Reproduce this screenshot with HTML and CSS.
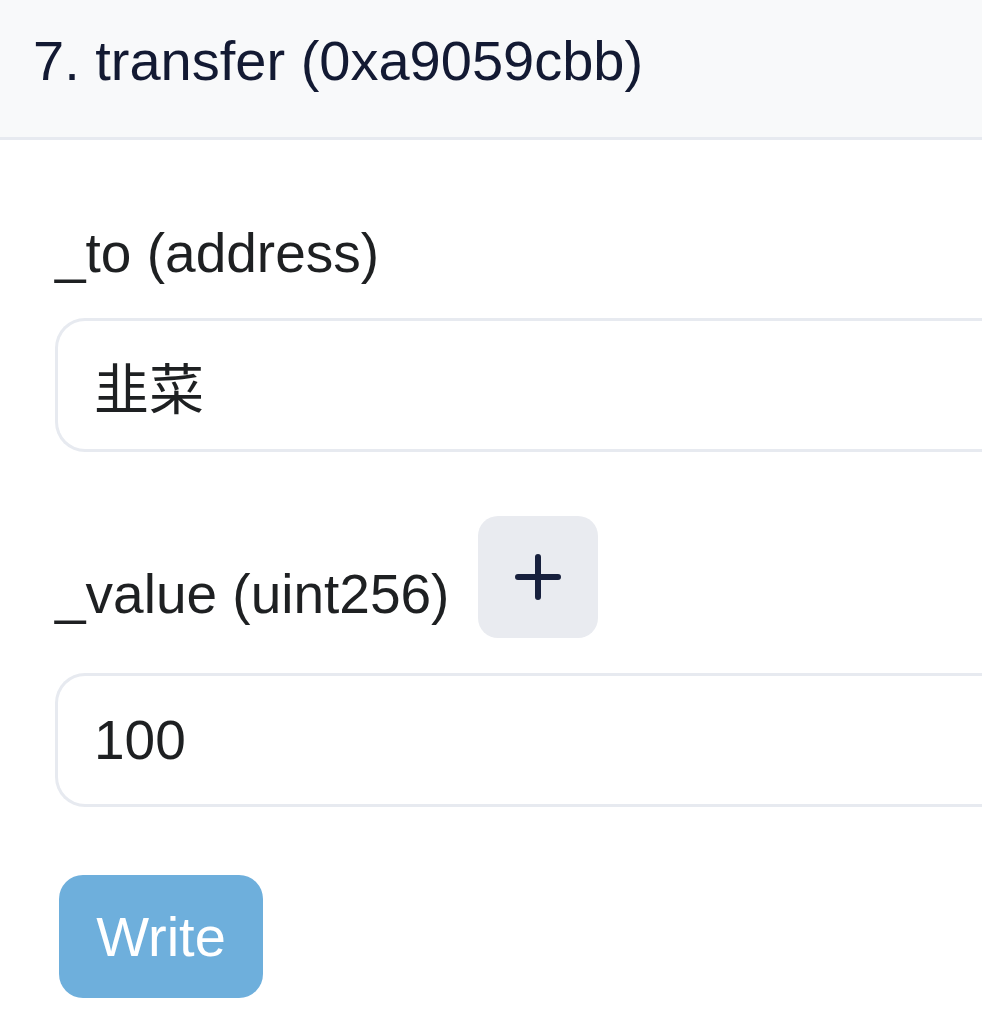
FILE: index.html
```html
<!DOCTYPE html>
<html lang="en">
<head>
<meta charset="utf-8">
<title>transfer</title>
<link rel="stylesheet" href="styles.css">
</head>
<body>
<div class="card">
  <div class="card-header">7. transfer (0xa9059cbb)</div>
  <div class="card-body">
    <div class="field">
      <label class="field-label">_to (address)</label>
      <input class="field-input" type="text" value="韭菜">
    </div>
    <div class="field field-value">
      <div class="label-row">
        <label class="field-label label-inline">_value (uint256)</label>
        <button class="plus-btn" type="button" aria-label="Add">
          <svg width="46" height="46" viewBox="0 0 46 46" aria-hidden="true">
            <path d="M23 3 V43 M3 23 H43" stroke="#17203d" stroke-width="6" stroke-linecap="round" fill="none"/>
          </svg>
        </button>
      </div>
      <input class="field-input" type="text" value="100">
    </div>
    <button class="write-btn" type="button">Write</button>
  </div>
</div>
</body>
</html>
```

FILE: styles.css
```css
html, body {
  margin: 0;
  padding: 0;
  background: #ffffff;
}

body {
  font-family: "Liberation Sans", "Noto Sans CJK SC", sans-serif;
  color: #1e2022;
}

.card {
  width: 100%;
}

.card-header {
  background: #f8f9fa;
  border-bottom: 3px solid #e7eaf0;
  font-size: 56px;
  line-height: 64px;
  color: #131a33;
  padding: 29px 33px 44px;
}

.card-body {
  padding: 81px 0 0 55px;
  display: flex;
  flex-direction: column;
}

.field {
  display: flex;
  flex-direction: column;
}

.field-label {
  font-size: 55px;
  line-height: 64px;
  color: #1e2022;
  margin-bottom: 33px;
}

.field-input {
  box-sizing: border-box;
  width: 100%;
  height: 134px;
  border: 3px solid #e7eaf0;
  border-right: none;
  border-radius: 30px 0 0 30px;
  padding: 0 0 0 36px;
  font-family: "Liberation Sans", "Noto Sans CJK SC", sans-serif;
  font-size: 55px;
  color: #1e2022;
  background: #ffffff;
  outline: none;
}

.field-value {
  margin-top: 64px;
}

.label-row {
  display: flex;
  align-items: flex-end;
  gap: 29px;
  margin-bottom: 35px;
}

.label-inline {
  margin-bottom: 12px;
}

.plus-btn {
  width: 120px;
  height: 122px;
  border: none;
  border-radius: 20px;
  background: #e9ebf0;
  display: flex;
  align-items: center;
  justify-content: center;
  padding: 0;
}

.write-btn {
  align-self: flex-start;
  margin: 68px 0 0 4px;
  width: 204px;
  height: 123px;
  border: none;
  border-radius: 24px;
  background: #6eafdc;
  color: #ffffff;
  font-family: "Liberation Sans", sans-serif;
  font-size: 56px;
  padding: 0;
}
```
